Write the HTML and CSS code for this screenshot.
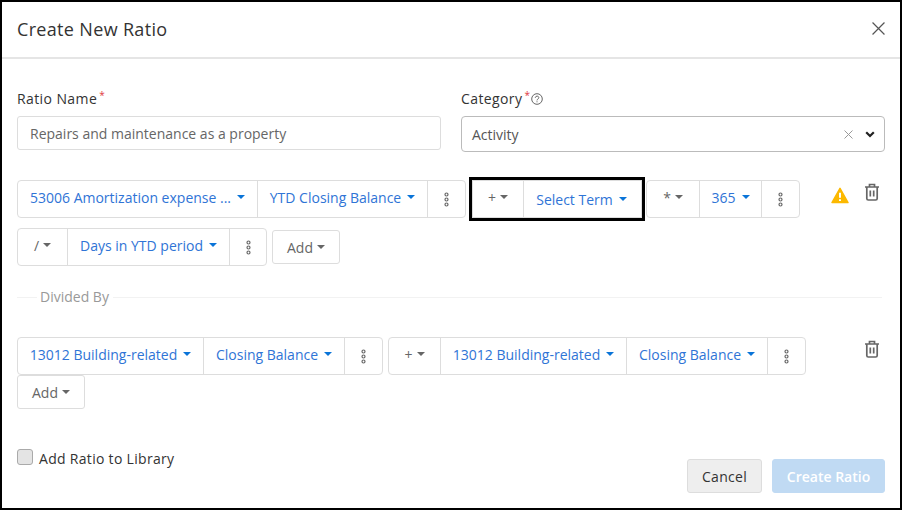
FILE: index.html
```html
<!DOCTYPE html>
<html lang="en">
<head>
<meta charset="utf-8">
<title>Create New Ratio</title>
<link rel="stylesheet" href="styles.css">
</head>
<body>
<div class="modal">
  <header class="head">
    <h1 class="title">Create New Ratio</h1>
    <svg class="close" viewBox="0 0 12 12"><path d="M.5.5l11 11M11.5.5l-11 11"/></svg>
  </header>
  <main class="content">
    <div class="fields">
      <div class="field">
        <label class="label"><span class="label-text">Ratio Name</span><sup class="req">*</sup></label>
        <div class="input">Repairs and maintenance as a property</div>
      </div>
      <div class="field">
        <label class="label"><span class="label-text">Category</span><sup class="req">*</sup>
          <svg class="help" viewBox="0 0 12 12"><circle cx="6" cy="6" r="5.3"/><path d="M4.3 4.8c0-2.2 3.5-2.2 3.5-.1 0 1.3-1.8 1.300-1.800 2.700"/><path d="M6 8.300v1"/></svg>
        </label>
        <div class="select">
          <span class="select-value">Activity</span>
          <svg class="clear" viewBox="0 0 9 9"><path d="M.5.5l8 8M8.500.5l-8 8"/></svg>
          <svg class="chev" viewBox="0 0 10 7"><path d="M1.200 1.200L5 5l3.800-3.800"/></svg>
        </div>
      </div>
    </div>

    <section class="terms terms-top">
      <div class="wrap wrap-top">
        <div class="group">
          <button class="seg seg-term s1">53006 Amortization expense ...<i class="caret"></i></button>
          <button class="seg seg-term s2">YTD Closing Balance<i class="caret"></i></button>
          <button class="seg seg-dots"><svg class="dots" viewBox="0 0 5 15"><circle cx="2.500" cy="2.500" r="1.500"/><circle cx="2.500" cy="7.500" r="1.500"/><circle cx="2.500" cy="12.500" r="1.500"/></svg></button>
        </div>
        <div class="group group-hl">
          <button class="seg seg-op op-plus">+<i class="caret caret-gray"></i></button>
          <button class="seg seg-term seg-low s-sel">Select Term<i class="caret"></i></button>
        </div>
        <div class="group">
          <button class="seg seg-op op-mul">*<i class="caret caret-gray"></i></button>
          <button class="seg seg-term s-365">365<i class="caret"></i></button>
          <button class="seg seg-dots"><svg class="dots" viewBox="0 0 5 15"><circle cx="2.500" cy="2.500" r="1.500"/><circle cx="2.500" cy="7.500" r="1.500"/><circle cx="2.500" cy="12.500" r="1.500"/></svg></button>
        </div>
        <div class="group">
          <button class="seg seg-op op-div">/<i class="caret caret-gray"></i></button>
          <button class="seg seg-term s-days">Days in YTD period<i class="caret"></i></button>
          <button class="seg seg-dots seg-dots-narrow"><svg class="dots" viewBox="0 0 5 15"><circle cx="2.500" cy="2.500" r="1.500"/><circle cx="2.500" cy="7.500" r="1.500"/><circle cx="2.500" cy="12.500" r="1.500"/></svg></button>
        </div>
        <button class="add">Add<i class="caret caret-gray"></i></button>
      </div>
      <div class="actions">
        <svg class="warn" viewBox="0 0 18 17"><path class="warn-bg" d="M9 1.300L17 15.500H1z"/><path class="warn-mark" d="M9 5.800v5M9 12.300v1.700"/></svg>
        <svg class="trash" viewBox="0 0 16 18"><path d="M1 4h14M5.500 4V1.500h5V4M2.800 4v11.500c0 .9.600 1.500 1.500 1.500h7.400c.9 0 1.500-.6 1.500-1.500V4M6.300 7.500v6M9.700 7.500v6"/></svg>
      </div>
    </section>

    <div class="divider"><span class="divider-text">Divided By</span></div>

    <section class="terms terms-bottom">
      <div class="wrap wrap-bottom">
        <div class="group">
          <button class="seg seg-term s-b1">13012 Building-related<i class="caret"></i></button>
          <button class="seg seg-term s-b2">Closing Balance<i class="caret"></i></button>
          <button class="seg seg-dots"><svg class="dots" viewBox="0 0 5 15"><circle cx="2.500" cy="2.500" r="1.500"/><circle cx="2.500" cy="7.500" r="1.500"/><circle cx="2.500" cy="12.500" r="1.500"/></svg></button>
        </div>
        <div class="group">
          <button class="seg seg-op op-plus2">+<i class="caret caret-gray"></i></button>
          <button class="seg seg-term s-b3">13012 Building-related<i class="caret"></i></button>
          <button class="seg seg-term s-b2">Closing Balance<i class="caret"></i></button>
          <button class="seg seg-dots"><svg class="dots" viewBox="0 0 5 15"><circle cx="2.500" cy="2.500" r="1.500"/><circle cx="2.500" cy="7.500" r="1.500"/><circle cx="2.500" cy="12.500" r="1.500"/></svg></button>
        </div>
        <button class="add">Add<i class="caret caret-gray"></i></button>
      </div>
      <div class="actions">
        <svg class="trash" viewBox="0 0 16 18"><path d="M1 4h14M5.500 4V1.500h5V4M2.800 4v11.500c0 .9.600 1.500 1.500 1.500h7.400c.9 0 1.500-.6 1.500-1.500V4M6.300 7.500v6M9.700 7.500v6"/></svg>
      </div>
    </section>

    <footer class="foot">
      <label class="check"><span class="box"></span>Add Ratio to Library</label>
      <div class="buttons">
        <button class="btn btn-cancel">Cancel</button>
        <button class="btn btn-create">Create Ratio</button>
      </div>
    </footer>
  </main>
</div>
</body>
</html>
```
FILE: styles.css
```css
* { box-sizing: border-box; }
html, body { margin: 0; height: 100%; }
body { font-family: "Open Sans", "Noto Sans", sans-serif; font-size: 14px; color: #333; background: #fff; }
.modal { width: 902px; height: 510px; border: 2px solid #000; background: #fff; overflow: hidden; }
.head { height: 57px; border-bottom: 2px solid #e5e5e5; display: flex; align-items: center; justify-content: space-between; padding: 0 15px 2px; }
.title { margin: 0; font-size: 18px; font-weight: 500; letter-spacing: .33px; color: #333; }
.close { width: 13px; height: 13px; fill: none; stroke: #555; stroke-width: 1.100; }
.content { padding: 31px 15px 0; }

.fields { display: grid; grid-template-columns: 424px 424px; column-gap: 20px; }
.label { display: flex; align-items: flex-start; height: 26px; line-height: 18px; font-weight: 500; color: #333; }
.label-text { letter-spacing: .4px; }
.req { color: #e0393e; font-size: 10px; line-height: 10px; margin-left: 2px; vertical-align: baseline; }
.help { width: 12px; height: 12px; margin: 3px 0 0 1px; fill: none; stroke: #666; stroke-width: 1; }
.input { height: 34px; border: 1px solid #ddd; border-radius: 3px; padding: 0 12px; line-height: 34px; color: #666; }
.select { height: 36px; border: 1px solid #bbb; border-radius: 4px; padding: 0 9px 0 10px; display: flex; align-items: center; color: #555; }
.select-value { flex: 1; padding-top: 1px; }
.clear { width: 9px; height: 9px; fill: none; stroke: #999; stroke-width: 1; margin-right: 12px; }
.chev { width: 10px; height: 7px; fill: none; stroke: #222; stroke-width: 2.200; }

.terms { display: flex; align-items: flex-start; }
.terms-top { margin-top: 28px; }
.terms-bottom { margin-top: 30px; }
.wrap { display: flex; flex-wrap: wrap; align-items: center; width: 812px; }
.wrap-top { row-gap: 10px; }
.wrap-bottom { row-gap: 0; }

.group { display: flex; height: 38px; border: 1px solid #ddd; border-radius: 4px; margin-right: 5px; background: #fff; }
.group-hl { outline: 3px solid #000; border-radius: 0; margin-left: 1px; margin-right: 4px; }
.seg { font: inherit; background: none; border: 0; border-right: 1px solid #ddd; padding: 0 0 4px; display: flex; align-items: center; justify-content: center; white-space: nowrap; height: 100%; }
.seg:last-child { border-right: 0; }
.seg-low { padding: 0 2px 0 0; }
.seg-term { color: #2f74d6; }
.seg-op { color: #666; }
.seg-dots { width: 37px; padding: 0; }
.seg-dots-narrow { width: 36px; }
.s1 { width: 240px; }
.s2 { width: 170px; }
.s-sel { width: 117px; }
.s-365 { width: 62px; }
.s-days { width: 162px; }
.s-b1 { width: 186px; }
.s-b2 { width: 141px; }
.s-b3 { width: 186px; }
.op-plus { width: 51px; }
.op-plus2 { width: 52px; }
.op-mul { width: 53px; }
.op-div { width: 50px; }
.caret { display: inline-block; width: 0; height: 0; margin-left: 6px; border-left: 4px solid transparent; border-right: 4px solid transparent; border-top: 4px solid #0a74d8; }
.caret-gray { border-top-color: #666; margin-left: 4px; }
.dots { width: 5px; height: 15px; fill: #fff; stroke: #666; stroke-width: 1.200; }

.add { font: inherit; color: #666; height: 34px; width: 68px; background: #fff; border: 1px solid #ddd; border-radius: 3px; padding: 0; display: flex; align-items: center; justify-content: center; }

.actions { display: flex; margin-left: auto; margin-right: 5px; gap: 15px; }
.warn { width: 18px; height: 17px; margin-top: 7px; }
.warn-bg { fill: #fcb900; stroke: #fcb900; stroke-width: 1.500; stroke-linejoin: round; }
.warn-mark { fill: none; stroke: #fff; stroke-width: 2; }
.trash { width: 16px; height: 18px; margin-top: 3px; fill: none; stroke: #666; stroke-width: 1.700; }

.divider { display: flex; align-items: center; height: 20px; margin-top: 21px; }
.divider::before { content: ""; width: 20px; border-top: 1px solid #f2f2f2; margin-right: 3px; }
.divider::after { content: ""; flex: 1; border-top: 1px solid #f2f2f2; margin-left: 4px; margin-right: 3px; }
.divider-text { color: #999; margin-top: -2px; }

.foot { display: flex; justify-content: space-between; align-items: flex-start; margin-top: 40px; }
.check { display: flex; align-items: flex-start; gap: 6px; height: 16px; line-height: 20px; font-weight: 500; letter-spacing: .3px; color: #333; }
.box { width: 16px; height: 16px; border: 1px solid #aaa; border-radius: 3px; background: #e4e4e4; }
.buttons { display: flex; gap: 10px; margin-top: 10px; }
.btn { font: inherit; font-weight: 500; letter-spacing: .3px; height: 34px; border-radius: 3px; padding: 0; }
.btn-cancel { width: 75px; background: #eee; border: 1px solid #ddd; color: #333; }
.btn-create { width: 113px; background: #c0daf3; border: 1px solid #c0daf3; color: #fff; font-weight: 600; letter-spacing: 0; }
```
